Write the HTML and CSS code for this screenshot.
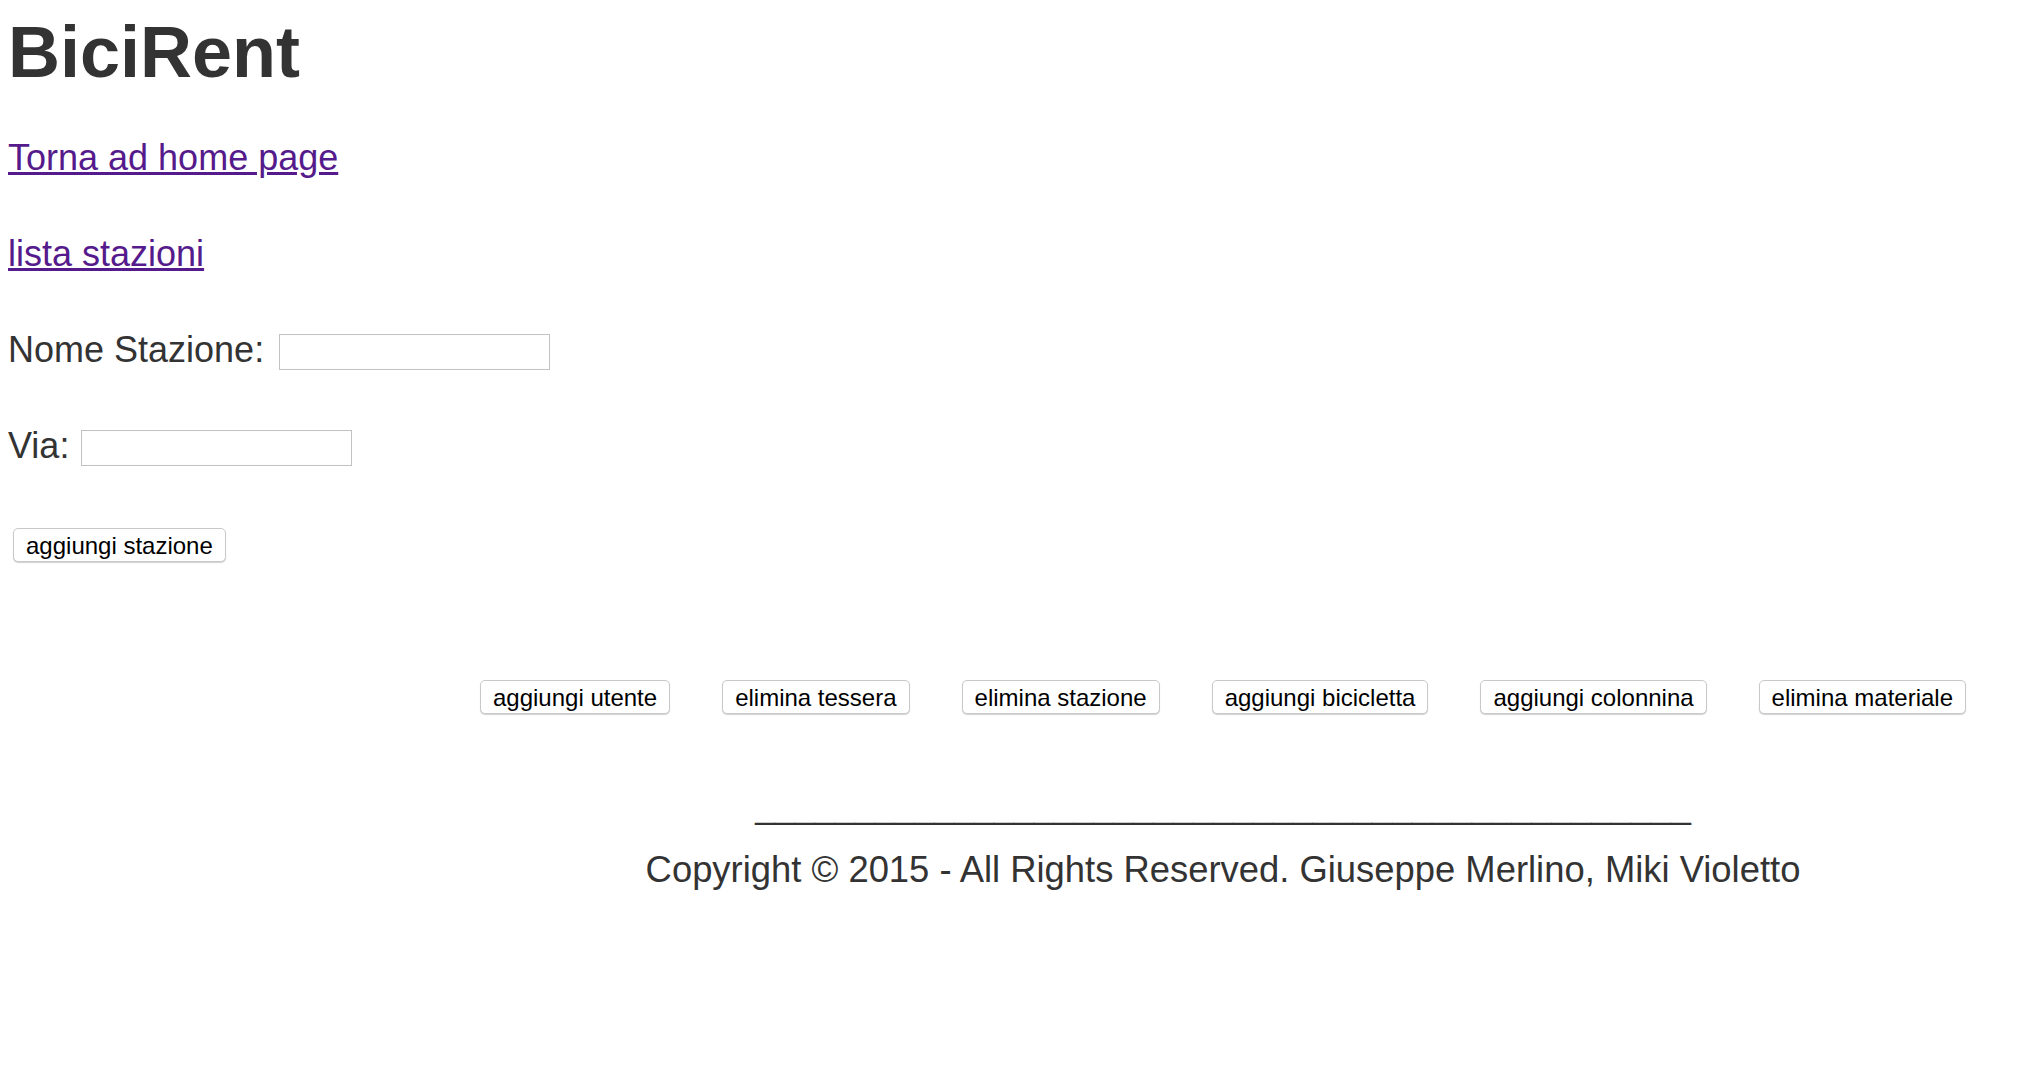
FILE: index.html
```html
<!DOCTYPE html>
<html lang="it">
<head>
<meta charset="utf-8">
<title>BiciRent</title>
<link rel="stylesheet" href="styles.css">
</head>
<body>
<h1 class="title">BiciRent</h1>
<div class="stack">
  <p class="row"><a class="link" href="#home">Torna ad home page</a></p>
  <p class="row"><a class="link" href="#stazioni">lista stazioni</a></p>
  <div class="row field"><label class="label" for="nome">Nome Stazione:</label><input class="input" id="nome" type="text"></div>
  <div class="row field"><label class="label" for="via">Via:</label><input class="input input-tight" id="via" type="text"></div>
</div>
<div class="submit-row"><button class="btn" type="button">aggiungi stazione</button></div>
<div class="main">
  <div class="actions">
    <button class="btn" type="button">aggiungi utente</button>
    <button class="btn" type="button">elimina tessera</button>
    <button class="btn" type="button">elimina stazione</button>
    <button class="btn" type="button">aggiungi bicicletta</button>
    <button class="btn" type="button">aggiungi colonnina</button>
    <button class="btn" type="button">elimina materiale</button>
  </div>
  <footer class="footer">
    <p class="rule">_______________________________________________</p>
    <p class="copy">Copyright © 2015 - All Rights Reserved. Giuseppe Merlino, Miki Violetto</p>
  </footer>
</div>
</body>
</html>
```
FILE: styles.css
```css
body {
  margin: 8px;
  font-family: "Liberation Sans", Arial, Helvetica, sans-serif;
  color: #333;
  background: #fff;
}

.title {
  margin: 4px 0 0;
  font-size: 72px;
  line-height: 80px;
  font-weight: 700;
  color: #333;
}

.stack {
  margin-top: 46px;
  display: flex;
  flex-direction: column;
  gap: 56px;
}

.row {
  margin: 0;
  height: 40px;
  font-size: 36px;
  line-height: 40px;
}

.link {
  color: #551a8b;
}

.field {
  display: flex;
  align-items: center;
}

.label {
  color: #333;
}

.input {
  box-sizing: border-box;
  width: 271px;
  height: 36px;
  margin: 4px 0 0 15px;
  border: 1px solid #c2c2c2;
  border-radius: 0;
  background: #fff;
  padding: 0 4px;
  font-size: 20px;
}

.input-tight {
  margin-left: 12px;
}

.submit-row {
  margin-top: 62px;
  padding-left: 5px;
}

.btn {
  box-sizing: border-box;
  height: 34px;
  padding: 1px 12px 0;
  font-family: "Liberation Sans", Arial, Helvetica, sans-serif;
  font-size: 24px;
  line-height: 32px;
  color: #000;
  background: #fff;
  border: 1px solid #c9c9c9;
  border-radius: 5px;
  box-shadow: 0 1px 1px rgba(0, 0, 0, 0.18);
}

.main {
  padding-left: 422px;
  margin-top: 118px;
}

.actions {
  display: flex;
  justify-content: center;
  gap: 52px;
}

.footer {
  margin-top: 72px;
  text-align: center;
  font-size: 36.4px;
  line-height: 40px;
  color: #333;
}

.rule {
  margin: 0;
  font-size: 35.8px;
}

.copy {
  margin: 24px 0 0;
}
```
